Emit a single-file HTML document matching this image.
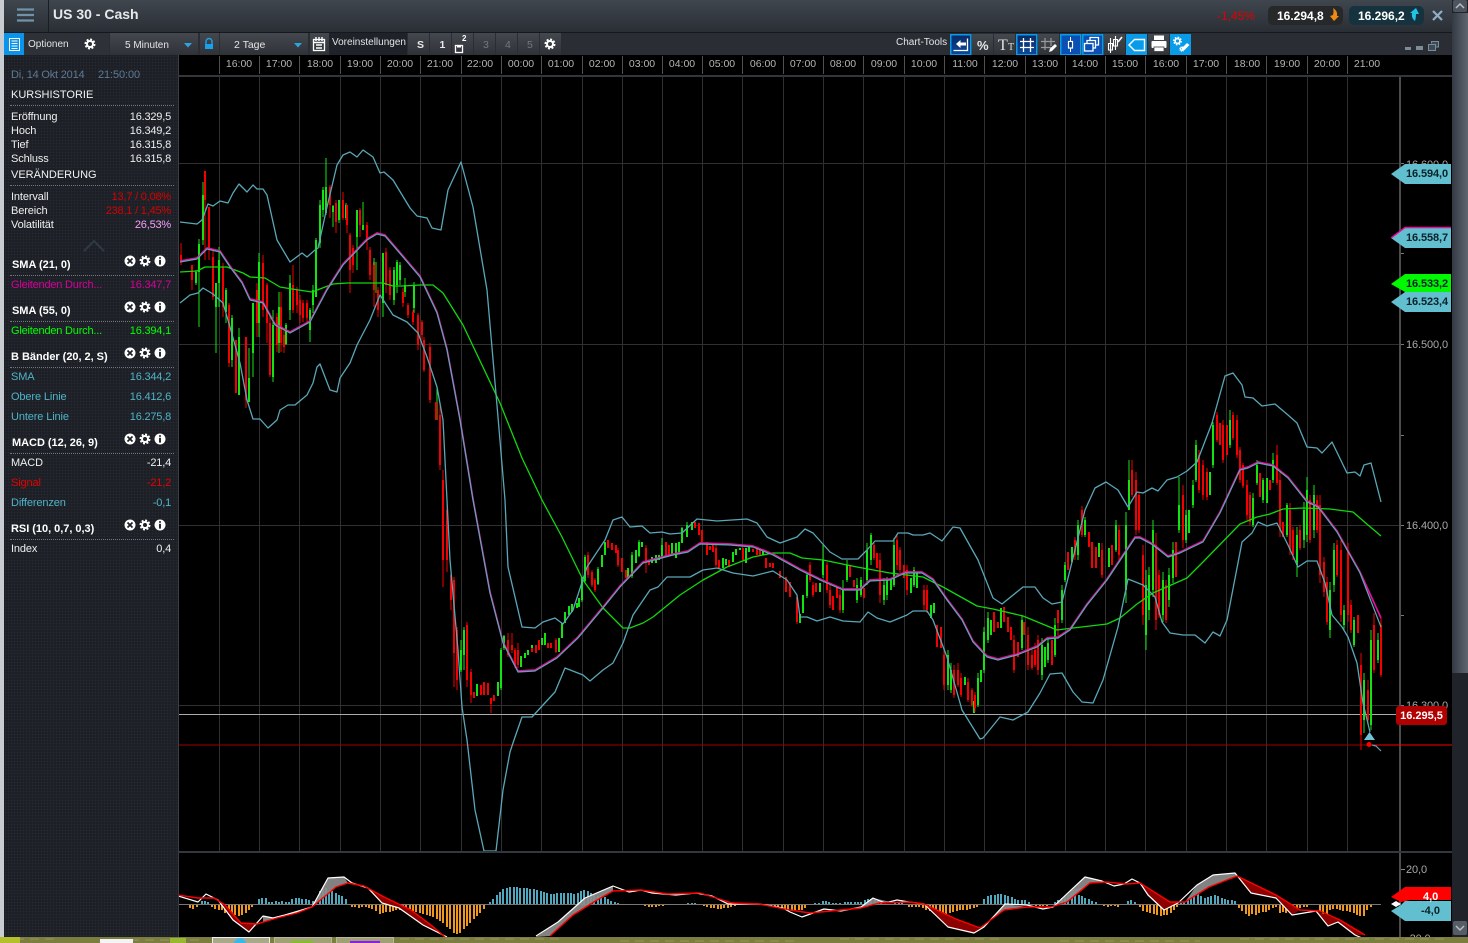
<!DOCTYPE html>
<html lang="de"><head><meta charset="utf-8"><title>US 30 - Cash</title>
<style>
html,body{margin:0;padding:0;width:1468px;height:943px;overflow:hidden;background:#000;font-family:"Liberation Sans",Arial,sans-serif}
#c{position:absolute;left:0;top:0}
#c text{font-family:"Liberation Sans",Arial,sans-serif}
.p{position:absolute;left:4px;top:55px;width:174px;height:882px;background-color:#1c2026;background-image:radial-gradient(#262b31 35%,transparent 40%);background-size:3px 3px}
.r{position:absolute;left:7px;width:160px;height:14px;line-height:14px;font-size:11px;color:#eee;display:flex;justify-content:space-between;white-space:pre;margin-top:1px}
.r span:first-child{letter-spacing:-.12px}
.r span:last-child{letter-spacing:-.2px}
.h{position:absolute;left:7px;height:14px;line-height:14px;font-size:11px;color:#f2f2f2;white-space:pre;margin-top:1px}
.b{font-weight:bold;left:8px;color:#fff;letter-spacing:-.03px}
.d{position:absolute;left:6px;width:164px;border-top:1px dotted #74787d;height:0}
</style></head><body>
<svg id="c" width="1468" height="943" viewBox="0 0 1468 943" xmlns="http://www.w3.org/2000/svg">
<defs>
<linearGradient id="tb" x1="0" y1="0" x2="0" y2="1"><stop offset="0" stop-color="#40464e"/><stop offset="1" stop-color="#292e35"/></linearGradient>
<linearGradient id="bt" x1="0" y1="0" x2="0" y2="1"><stop offset="0" stop-color="#44494f"/><stop offset="1" stop-color="#2f3338"/></linearGradient>
<linearGradient id="sc" x1="0" y1="0" x2="1" y2="0"><stop offset="0" stop-color="#333a43"/><stop offset="1" stop-color="#5f666f"/></linearGradient>
<linearGradient id="bl" x1="0" y1="0" x2="0" y2="1"><stop offset="0" stop-color="#0a2a66"/><stop offset="1" stop-color="#0b4a9c"/></linearGradient>
<clipPath id="m"><rect x="179" y="76" width="1221" height="775"/></clipPath>
<clipPath id="n"><rect x="179" y="853" width="1221" height="84"/></clipPath>
<g id="gear"><circle r="3" fill="none" stroke="#fff" stroke-width="2"/><circle r="4.6" fill="none" stroke="#fff" stroke-width="1.800" stroke-dasharray="2 1.600"/></g>
<g id="x"><circle r="5.500" fill="#fff"/><path d="M-2.500-2.500L2.500 2.500M2.500-2.500L-2.500 2.500" stroke="#1c2026" stroke-width="1.700"/></g>
<g id="i"><circle r="5.500" fill="#fff"/><path d="M0-1.200V3.600" stroke="#1c2026" stroke-width="1.900"/><circle cy="-3" r="1" fill="#1c2026"/></g>
</defs>

<rect width="1468" height="943" fill="#000"/>
<rect x="0" y="0" width="4" height="937" fill="#c9ccd0"/>
<!-- title bar -->
<rect x="4" y="0" width="1448" height="33" fill="url(#tb)"/>
<rect x="4" y="32" width="1448" height="1" fill="#15181c"/>
<rect x="48" y="0" width="1" height="32" fill="#1a1d22"/>
<path d="M17 9.500H34M17 15H34M17 20.500H34" stroke="#6f93a8" stroke-width="2.200"/>
<text x="53" y="19" font-size="14" font-weight="bold" fill="#e6e8ea">US 30 - Cash</text>
<text x="1217" y="20" font-size="12" fill="#e00000">-1,45%</text>
<rect x="1268" y="6" width="75" height="19" rx="5" fill="#26282a"/>
<text x="1277" y="20" font-size="12" font-weight="bold" fill="#fff">16.294,8</text>
<path d="M1333 8Q1338 11 1337 16L1339 16L1334 21L1330 16L1333 15Q1334 11 1333 8Z" fill="#f08a10"/>
<rect x="1349" y="6" width="75" height="19" rx="5" fill="#15323e"/>
<text x="1358" y="20" font-size="12" font-weight="bold" fill="#fff">16.296,2</text>
<path d="M1415 21Q1411 18 1412 13L1410 13L1416 8L1419 14L1416 14Q1416 18 1415 21Z" fill="#20c4e4"/>
<path d="M1433 11L1442 20M1442 11L1433 20" stroke="#8eb0c6" stroke-width="2.200"/>
<!-- toolbar -->
<rect x="4" y="33" width="1448" height="22" fill="#2a2e34"/>
<rect x="4" y="33" width="20" height="22" fill="#0a94ea"/>
<rect x="9.500" y="38.500" width="10" height="12" fill="none" stroke="#fff"/><path d="M11.500 41H17.500M11.500 43.500H17.500M11.500 46H17.500M11.500 48.500H17.500" stroke="#fff"/>
<rect x="24" y="33" width="85" height="22" fill="#2e3238"/>
<rect x="110" y="33" width="88" height="22" fill="url(#bt)"/>
<rect x="200" y="33" width="19" height="22" fill="url(#bt)"/>
<rect x="220" y="33" width="88" height="22" fill="url(#bt)"/>
<rect x="310" y="33" width="19" height="22" fill="url(#bt)"/>
<rect x="329" y="33" width="78" height="22" fill="#1f2329"/>
<g fill="url(#bt)"><rect x="408" y="33" width="21" height="22"/><rect x="430" y="33" width="21" height="22"/><rect x="452" y="33" width="21" height="22"/><rect x="474" y="33" width="21" height="22"/><rect x="496" y="33" width="21" height="22"/><rect x="518" y="33" width="21" height="22"/><rect x="540" y="33" width="21" height="22"/></g>
<g font-size="10" fill="#e4e4e4">
<text x="28" y="47">Optionen</text><text x="125" y="48">5 Minuten</text><text x="234" y="48" font-size="10.500">2 Tage</text><text x="332" y="45">Voreinstellungen</text>
<text x="896" y="45">Chart-Tools</text>
</g>
<use href="#gear" x="90" y="44"/><use href="#gear" x="550" y="44"/>
<path d="M184 43H192L188 47.500ZM294 43H302L298 47.500Z" fill="#2aa5e0"/>
<path d="M206 44.500V41.500A3 3 0 0 1 212 41.500V44.500" fill="none" stroke="#19a2ea" stroke-width="1.400"/><rect x="205" y="44" width="8" height="5" fill="#19a2ea"/>
<rect x="313.500" y="39.500" width="11" height="11" fill="none" stroke="#fff" stroke-width="1.300"/><path d="M313 42.500H325M316 37V41M319 37V41M322 37V41M316 45H322M316 48H322" stroke="#fff" stroke-width="1.400"/>
<g font-size="10.500" font-weight="bold" fill="#e8e8e8"><text x="417" y="48">S</text><text x="439.500" y="48">1</text></g>
<rect x="455.500" y="45.500" width="7" height="7" fill="none" stroke="#fff" stroke-width="1.300"/><rect x="457" y="45" width="4" height="2.500" fill="#fff"/><text x="462" y="41" font-size="8" font-weight="bold" fill="#fff">2</text>
<g font-size="10.500" fill="#74787d"><text x="483" y="48">3</text><text x="505" y="48">4</text><text x="527" y="48">5</text></g>
<!-- chart tools -->
<g stroke="#0a9be8" stroke-width="1.500">
<rect x="950.750" y="34.750" width="20" height="20" fill="url(#bl)"/>
<rect x="1016.750" y="34.750" width="20" height="20" fill="url(#bl)"/>
<rect x="1060.750" y="34.750" width="20" height="20" fill="#0a50b4"/>
<rect x="1082.750" y="34.750" width="20" height="20" fill="#0a50b4"/>
</g>
<g fill="url(#bt)"><rect x="972" y="34" width="21" height="21"/><rect x="994" y="34" width="21" height="21"/><rect x="1038" y="34" width="21" height="21"/><rect x="1104" y="34" width="21" height="21"/><rect x="1148" y="34" width="21" height="21"/></g>
<rect x="1126" y="34" width="21" height="21" fill="#0a9be8"/><rect x="1170" y="34" width="21" height="21" fill="#0a9be8"/>
<path d="M967.500 38.500V50.500H953.500" fill="none" stroke="#fff" stroke-width="1.300"/><path d="M956 44L960.500 40V42.500H966V45.500H960.500V48Z" fill="#fff"/>
<text x="977" y="50" font-size="13" font-weight="bold" fill="#e6e6e6">%</text>
<text x="998" y="50" font-size="16" fill="#e0e0e0" style="font-family:'Liberation Serif',serif">T</text><text x="1008" y="50" font-size="10" fill="#e0e0e0" style="font-family:'Liberation Serif',serif">T</text>
<path d="M1023.500 38V52M1030.500 38V52M1020 41.500H1034M1020 47.500H1034" stroke="#fff" stroke-width="1.300"/>
<path d="M1045 38V50M1051 38V46M1041 41.500H1055M1041 47.500H1051" stroke="#9a9a9a" stroke-width="1.200"/><path d="M1049 52L1050 48.500L1055 44L1057 46L1052 51Z" fill="#fff"/>
<path d="M1070.500 37V52" stroke="#fff"/><rect x="1068.500" y="41.500" width="4" height="6.500" fill="url(#bl)" stroke="#fff" stroke-width="1.200"/>
<path d="M1090 40.500V37.500H1098.500V45H1096M1087 43.500V40.500H1095.500V48H1093" fill="none" stroke="#fff" stroke-width="1.300"/><rect x="1084.500" y="43.500" width="8.500" height="7.500" fill="none" stroke="#fff" stroke-width="1.300"/>
<path d="M1110.500 38V53M1115.500 36V50M1108.500 43.500H1112.500V50H1108.500ZM1113.500 39.500H1117.500V46H1113.500Z" fill="none" stroke="#fff" stroke-width="1.100"/><path d="M1118 42L1122 37" stroke="#fff" stroke-width="1.600"/>
<path d="M1129 45L1134.500 39.500H1144.500V50.500H1134.500Z" fill="none" stroke="#fff" stroke-width="1.400"/>
<path d="M1154 35.500H1164V40H1154Z" fill="#fff"/><rect x="1151.500" y="41" width="15" height="7" rx="1" fill="#fff"/><rect x="1154" y="47" width="10" height="4.500" fill="#fff" stroke="#3a3e44" stroke-width=".8"/>
<g transform="translate(1177.500 41) scale(.8)"><use href="#gear"/></g><g transform="translate(1182 49) scale(.5)"><use href="#gear"/></g><path d="M1181 51L1182 48L1187 43L1189.500 45L1184.500 50Z" fill="#fff"/>
<g fill="#7a8c98"><rect x="1405" y="47" width="6" height="3"/><rect x="1416" y="46" width="7" height="4"/></g>
<path d="M1431.500 43.500V41.500H1438.500V47H1436M1428.500 44.500H1435.500V50.500H1428.500Z" fill="#3a4a56" stroke="#7a8c98"/>

<!-- time header -->
<rect x="179" y="55" width="1273" height="20" fill="#000"/>
<g id="tk" stroke="#505050" stroke-width="1"><path d="M219.500 56V74M259.500 56V74M299.500 56V74M340.500 56V74M380.500 56V74M420.500 56V74M461.500 56V74M501.500 56V74M541.500 56V74M582.500 56V74M622.500 56V74M662.500 56V74M702.500 56V74M742.500 56V74M783.500 56V74M823.500 56V74M863.500 56V74M904.500 56V74M944.500 56V74M984.500 56V74M1025.500 56V74M1065.500 56V74M1105.500 56V74M1145.500 56V74M1186.500 56V74M1226.500 56V74M1266.500 56V74M1307.500 56V74M1347.500 56V74"/></g>
<g font-size="10.500" fill="#b4b4b4" text-anchor="middle">
<text x="239" y="67">16:00</text><text x="279" y="67">17:00</text><text x="320" y="67">18:00</text><text x="360" y="67">19:00</text><text x="400" y="67">20:00</text><text x="440" y="67">21:00</text><text x="480" y="67">22:00</text><text x="521" y="67">00:00</text><text x="561" y="67">01:00</text><text x="602" y="67">02:00</text><text x="642" y="67">03:00</text><text x="682" y="67">04:00</text><text x="722" y="67">05:00</text><text x="763" y="67">06:00</text><text x="803" y="67">07:00</text><text x="843" y="67">08:00</text><text x="884" y="67">09:00</text><text x="924" y="67">10:00</text><text x="965" y="67">11:00</text><text x="1005" y="67">12:00</text><text x="1045" y="67">13:00</text><text x="1085" y="67">14:00</text><text x="1125" y="67">15:00</text><text x="1166" y="67">16:00</text><text x="1206" y="67">17:00</text><text x="1247" y="67">18:00</text><text x="1287" y="67">19:00</text><text x="1327" y="67">20:00</text><text x="1367" y="67">21:00</text>
</g>
<rect x="179" y="75" width="1273" height="2" fill="#33373c"/>
<rect x="178" y="55" width="1" height="882" fill="#3a3f45"/>

<!-- main grid -->
<path stroke="#303030" stroke-width="1" d="M219.500 77V851M259.500 77V851M299.500 77V851M340.500 77V851M380.500 77V851M420.500 77V851M461.500 77V851M501.500 77V851M541.500 77V851M582.500 77V851M622.500 77V851M662.500 77V851M702.500 77V851M742.500 77V851M783.500 77V851M823.500 77V851M863.500 77V851M904.500 77V851M944.500 77V851M984.500 77V851M1025.500 77V851M1065.500 77V851M1105.500 77V851M1145.500 77V851M1186.500 77V851M1226.500 77V851M1266.500 77V851M1307.500 77V851M1347.500 77V851M179 163.500H1400M179 344.500H1400M179 525.500H1400M179 705.500H1400"/>
<rect x="1399" y="77" width="2" height="860" fill="#4c4c4c"/>
<path stroke="#777" d="M1401 163.500H1404M1401 253.500H1404M1401 344.500H1404M1401 435.500H1404M1401 525.500H1404M1401 615.500H1404M1401 705.500H1404"/>
<g font-size="11" fill="#a9a9a9" letter-spacing="-.1"><text x="1406" y="168">16.600,0</text><text x="1406" y="348">16.500,0</text><text x="1406" y="529">16.400,0</text><text x="1406" y="709">16.300,0</text><text x="1406" y="873">20,0</text><text x="1406" y="942">-20,0</text></g>
<path d="M179 714.500H1396" stroke="#ababab"/>
<path d="M179 745H1370" stroke="#a00000"/><path d="M1370 745H1452" stroke="#f00"/>

<g clip-path="url(#m)">
<!-- candles -->
<g shape-rendering="crispEdges" fill="none">
<path stroke="#12e412" stroke-width="1" d="M196 270V285M199 239V327M203 182V245M216 283V353M219 247V307M226 288V323M232 315V367M239 328V395M249 348V402M253 303V377M259 253V337M273 310V382M279 292V353M286 323V345M290 275V320M310 308V342M313 285V313M316 238V297M320 200V248M323 187V217M326 158V215M333 205V227M339 200V223M346 203V220M357 210V270M363 202V230M374 258V278M376 262V293M383 253V317M394 267V305M397 260V293M400 262V285M405 278V297M414 282V313M437 387V420M461 640V672M464 627V670M501 648V690M504 635V650M582 577V602M585 555V583M598 567V585M632 552V578M639 540V557M662 538V557M682 527V543M687 522V537M807 573V598M823 545V578M843 580V613M847 560V582M857 578V603M861 577V597M867 543V585M871 533V565M884 578V605M887 577V600M894 538V587M914 567V587M948 650V690M951 663V693M978 673V707M984 627V673M988 612V643M1022 615V650M1042 638V680M1048 638V663M1055 618V657M1062 585V623M1065 562V582M1078 520V560M1085 517V537M1116 520V552M1126 512V603M1129 460V510M1146 570V650M1149 567V620M1153 520V597M1163 572V622M1169 568V607M1173 542V583M1179 477V533M1186 510V543M1193 480V508M1196 440V482M1213 422V468M1230 410V448M1253 493V527M1257 460V485M1263 478V503M1273 453V483M1287 503V537M1297 527V577M1304 502V548M1307 477V542M1314 485V538M1330 582V638M1334 543V592M1344 605V630M1354 617V647M1364 673V733M1371 630V730M1378 633V663"/>
<path stroke="#12e412" stroke-width="2" d="M196 272V283M199 244V272M203 195V240M216 283V307M219 260V283M226 290V312M232 318V360M239 337V395M249 378V402M253 303V353M259 262V323M273 325V377M279 307V343M286 325V344M290 283V310M310 310V330M313 290V305M316 240V297M320 205V243M323 190V210M326 187V213M333 206V212M339 200V220M346 205V218M357 210V237M363 225V230M374 262V275M383 253V303M394 270V300M397 262V285M400 265V280M405 285V292M414 285V308M461 650V670M464 630V655M477 684V696M498 682V696M501 650V688M504 636V648M521 656V667M525 653V658M528 650V655M532 645V650M542 638V645M545 633V645M559 638V652M562 623V638M565 612V623M569 606V615M572 604V612M577 603V608M579 598V607M582 577V600M585 557V581M598 569V584M602 555V567M605 542V555M628 568V578M632 555V576M636 550V563M639 542V556M642 542V547M652 557V563M656 555V563M659 555V560M662 545V557M672 543V555M676 543V558M679 542V552M682 528V543M687 525V537M692 522V530M723 558V568M726 559V565M733 552V562M736 549V555M740 548V550M746 548V563M749 547V552M763 550V555M800 614V623M803 595V613M807 575V596M820 583V592M823 560V575M843 590V610M847 565V580M857 585V600M861 580V595M867 550V580M871 535V560M884 585V600M887 580V595M891 580V590M894 545V585M911 578V593M914 570V585M917 573V588M931 605V618M934 603V613M948 655V685M951 670V690M965 677V685M974 701V713M978 678V705M981 670V682M984 632V670M988 618V640M991 620V635M1001 608V628M1022 620V648M1042 645V675M1045 647V667M1048 643V660M1055 625V655M1062 590V620M1065 565V580M1072 547V562M1078 525V555M1085 520V535M1099 543V557M1109 548V567M1116 525V550M1126 525V590M1129 480V510M1146 585V635M1149 575V610M1153 530V590M1163 580V615M1169 575V600M1173 550V578M1179 505V530M1186 515V540M1189 510V533M1193 485V505M1196 445V480M1210 472V495M1213 425V465M1230 420V445M1253 498V525M1257 465V483M1263 480V500M1267 478V503M1273 460V480M1287 505V535M1297 535V565M1304 510V540M1307 490V535M1314 495V530M1330 590V630M1334 550V585M1344 610V625M1354 620V645M1364 680V720M1371 640V725M1378 640V660"/>
<path stroke="#f40000" stroke-width="1" d="M181 243V265M192 265V290M205 171V260M209 207V260M213 250V300M223 263V317M229 303V367M236 340V393M246 337V408M257 283V337M263 255V317M267 283V343M270 313V377M277 313V352M281 292V352M284 330V353M293 265V313M297 287V313M300 295V323M303 300V322M307 300V322M330 185V218M336 200V233M343 192V220M347 205V233M350 233V293M353 245V273M360 208V237M367 222V250M370 247V280M374 262V307M378 287V317M386 248V293M390 267V300M403 288V307M408 303V318M413 310V325M418 313V350M422 320V340M424 337V372M430 343V403M436 402V420M440 405V470M443 470V587M447 500V572M451 572V610M454 577V687M457 627V690M467 622V687M471 669V703M491 698V713M508 633V657M512 633V653M515 648V668M518 643V668M556 638V653M588 552V578M592 570V587M595 578V592M618 548V567M646 545V573M716 545V567M797 595V624M810 562V582M813 582V597M827 562V593M830 585V608M840 590V613M874 543V560M880 553V603M897 535V570M900 547V573M907 565V595M924 585V610M927 585V613M944 648V690M954 665V698M958 663V687M961 673V697M968 678V702M972 688V707M975 692V712M1014 635V673M1028 627V670M1032 650V670M1035 643V667M1038 635V675M1058 610V637M1075 537V560M1082 506V537M1102 543V578M1119 525V560M1132 460V497M1136 472V535M1139 493V533M1143 545V625M1156 533V630M1159 570V618M1166 580V623M1183 485V548M1199 450V493M1203 460V500M1207 468V500M1217 412V442M1223 420V463M1233 412V440M1237 415V458M1240 447V483M1243 463V488M1247 480V520M1250 492V525M1277 445V485M1280 470V537M1290 503V555M1293 527V560M1300 525V550M1310 495V543M1317 495V533M1320 495V583M1324 557V597M1327 577V625M1337 540V577M1341 540V622M1348 543V622M1351 600V633M1361 653V750M1368 680V725M1374 613V673M1381 618V677"/>
<path stroke="#f40000" stroke-width="2" d="M181 255V262M192 265V280M205 171V200M209 207V250M213 257V297M223 267V307M229 305V363M236 340V393M246 337V400M257 290V323M263 263V310M267 285V323M270 323V375M277 317V345M281 307V343M284 335V347M293 285V310M297 290V305M300 300V315M303 303V318M307 303V318M330 187V205M336 203V222M343 200V218M347 205V225M350 235V270M353 248V265M360 210V225M367 225V240M370 250V275M374 265V290M378 290V310M386 252V285M390 270V295M403 292V303M408 305V315M413 312V322M418 315V345M422 322V335M424 340V370M430 347V400M436 402V420M440 415V465M443 480V560M447 510V560M451 575V600M454 580V653M457 630V680M467 625V680M471 672V695M474 692V698M481 685V695M484 682V695M488 683V695M491 698V704M494 695V701M508 640V655M512 645V650M515 650V665M518 650V665M532 648V652M536 645V653M539 640V650M548 643V648M551 643V648M556 640V652M588 555V575M592 572V585M595 580V590M608 540V548M612 543V550M616 545V553M618 550V565M622 558V572M626 570V578M646 548V562M649 560V565M666 542V555M669 545V555M695 522V528M699 523V535M702 530V542M707 542V555M710 546V550M713 545V552M716 548V565M719 560V568M729 560V567M743 548V560M753 549V552M757 549V555M760 550V555M766 558V568M770 563V567M773 563V568M780 571V578M786 577V592M790 582V597M797 597V622M810 565V580M813 585V595M816 583V592M827 565V590M830 590V605M833 596V610M837 587V598M840 595V610M850 565V577M854 580V587M864 588V598M874 545V558M877 553V568M880 560V595M897 540V565M900 550V570M904 565V578M907 570V590M924 590V605M927 590V610M937 625V647M941 627V648M944 655V685M954 670V695M958 670V685M961 678V695M968 682V700M972 690V705M975 695V708M994 612V632M998 622V628M1004 607V622M1008 617V632M1011 627V640M1014 640V670M1018 642V657M1024 622V635M1028 635V665M1032 655V668M1035 650V665M1038 640V670M1052 640V665M1058 610V623M1068 552V570M1075 540V555M1082 510V535M1089 532V547M1092 542V568M1096 547V568M1102 550V575M1112 545V565M1119 530V555M1132 470V495M1136 480V530M1139 495V530M1143 555V615M1156 545V620M1159 575V615M1166 585V620M1176 542V577M1183 495V540M1199 455V490M1203 465V495M1207 472V497M1217 415V440M1220 423V445M1223 425V460M1227 425V455M1233 415V438M1237 420V455M1240 450V480M1243 465V486M1247 485V515M1250 495V522M1260 473V497M1270 480V490M1277 455V483M1280 480V530M1283 522V537M1290 510V550M1293 530V555M1300 530V548M1310 500V540M1317 500V530M1320 505V575M1324 562V592M1327 582V622M1337 545V575M1341 550V615M1348 550V615M1351 605V630M1358 615V633M1361 665V735M1368 690V720M1374 625V670M1381 625V675"/>
</g>
<!-- SMA55 -->
<polyline fill="none" stroke="#12d80d" stroke-width="1.300" stroke-linejoin="round" points="180,272 197,271 205,267 227,267 243,273 250,277 265,278 280,287 292,289 312,292 333,284 347,283 360,283 383,283 393,286 403,286 420,285 433,285 443,293 463,325 500,403 522,458 542,500 562,537 583,580 603,608 623,628 630,628 643,623 653,617 680,595 703,580 727,567 753,557 773,553 790,553 802,558 823,560 857,567 890,573 923,577 943,587 977,606 993,609 1023,616 1040,623 1057,630 1073,628 1107,624 1120,618 1137,604 1153,593 1187,578 1203,562 1240,524 1257,517 1270,514 1283,509 1303,508 1330,509 1353,512 1368,525 1381,536"/>
<!-- SMA21 / BB mid -->
<polyline fill="none" stroke="#e0109a" stroke-width="1.700" stroke-linejoin="round" transform="translate(0,-1)" points="180,262 197,259 207,249 220,252 230,267 242,283 250,300 263,303 275,325 290,333 310,322 327,290 343,265 367,240 377,234 385,236 403,257 420,277 437,313 447,350 460,420 473,500 490,593 503,643 518,672 535,671 557,658 578,638 603,608 620,587 643,563 673,555 688,552 700,544 730,545 753,547 773,555 800,570 820,580 843,590 860,590 870,581 890,580 905,573 922,573 933,580 947,600 962,620 973,642 987,657 998,660 1017,655 1037,647 1047,639 1058,638 1070,630 1087,605 1107,580 1135,538 1140,538 1153,545 1168,557 1180,553 1203,542 1220,513 1240,470 1248,468 1258,463 1273,466 1288,478 1307,502 1318,507 1337,532 1360,573 1381,619"/>
<polyline fill="none" stroke="#5aa7b8" stroke-width="1.200" stroke-linejoin="round" points="180,262 197,259 207,249 220,252 230,267 242,283 250,300 263,303 275,325 290,333 310,322 327,290 343,265 367,240 377,234 385,236 403,257 420,277 437,313 447,350 460,420 473,500 490,593 503,643 518,672 535,671 557,658 578,638 603,608 620,587 643,563 673,555 688,552 700,544 730,545 753,547 773,555 800,570 820,580 843,590 860,590 870,581 890,580 905,573 922,573 933,580 947,600 962,620 973,642 987,657 998,660 1017,655 1037,647 1047,639 1058,638 1070,630 1087,605 1107,580 1135,538 1140,538 1153,545 1168,557 1180,553 1203,542 1220,513 1240,470 1248,468 1258,463 1273,466 1288,478 1307,502 1318,507 1337,532 1360,573 1381,627"/>
<!-- upper band -->
<polyline fill="none" stroke="#5aa7b8" stroke-width="1.300" stroke-linejoin="round" points="180,222 197,224 202,220 208,204 213,206 220,201 228,203 233,193 239,184 247,192 253,185 257,189 263,189 267,195 277,240 290,262 302,253 307,257 315,250 318,248 327,207 337,165 343,155 350,152 357,157 363,150 373,157 380,173 384,172 393,180 410,208 417,216 427,218 432,228 441,230 448,190 461,162 473,207 487,290 498,417 505,500 508,567 522,627 535,628 543,622 555,618 563,624 573,610 587,567 605,540 613,520 622,517 630,527 642,526 650,533 662,532 670,534 682,533 697,519 717,521 747,519 757,523 767,537 780,543 797,537 805,529 813,533 830,552 842,559 858,559 867,550 875,541 893,541 898,533 908,533 913,535 923,535 930,533 942,541 953,527 960,528 978,560 993,598 1002,604 1023,587 1035,587 1043,598 1052,604 1062,602 1085,510 1095,488 1106,482 1118,490 1128,507 1137,492 1143,493 1152,488 1158,491 1167,480 1177,477 1187,471 1197,462 1212,423 1225,376 1233,373 1242,385 1245,397 1253,398 1262,406 1275,404 1288,415 1297,423 1307,447 1317,448 1322,453 1332,442 1347,473 1355,472 1360,476 1364,465 1371,463 1381,502"/>
<!-- lower band -->
<polyline fill="none" stroke="#5aa7b8" stroke-width="1.300" stroke-linejoin="round" points="180,303 190,295 198,293 203,288 213,294 223,303 230,327 240,363 247,400 253,419 260,419 268,428 277,420 280,410 288,405 295,405 307,395 313,383 317,367 320,364 330,390 337,392 340,378 350,363 357,345 370,320 380,295 393,315 407,322 418,333 427,357 437,387 443,420 450,560 458,650 462,707 467,740 475,810 484,851 496,851 503,790 510,752 514,740 522,717 532,717 543,705 555,692 565,668 583,675 590,681 603,670 613,663 623,643 633,615 650,590 658,587 667,577 690,577 703,570 717,568 733,573 753,576 773,571 787,580 797,595 800,617 807,617 817,621 830,617 843,621 860,622 868,612 877,618 890,622 907,615 913,611 927,611 933,620 947,657 962,710 980,739 983,738 1000,717 1013,720 1028,712 1040,693 1050,674 1062,673 1073,692 1082,702 1093,703 1103,680 1118,627 1128,579 1143,585 1155,597 1162,622 1170,633 1183,635 1195,635 1205,643 1213,632 1220,636 1227,620 1242,542 1252,533 1258,522 1267,526 1277,523 1288,545 1298,567 1307,561 1317,561 1325,583 1332,615 1342,627 1348,637 1357,663 1363,703 1370,732"/>
<path d="M1364 740L1369.500 732L1375 740Z" fill="#6fc4d8"/>
<circle cx="1369" cy="744.500" r="2.500" fill="#f00"/>
<path d="M1372 745L1376 746L1381 751" fill="none" stroke="#5aa7b8" stroke-width="1.200"/>
</g>

<!-- panel divider -->
<rect x="179" y="851" width="1273" height="2" fill="#33373f"/>
<rect x="1399" y="853" width="2" height="84" fill="#4c4c4c"/>
<path d="M1401 869.500H1405" stroke="#888"/>

<!-- MACD -->
<g clip-path="url(#n)">
<path d="M179 904.500H1381" stroke="#777"/>
<g shape-rendering="crispEdges" fill="none" stroke-width="2">
<path stroke="#4fa8be" d="M202 904v-3M205 904v-3M208 904v-2M259 904v-5M262 904v-6M266 904v-6M269 904v-2M272 904v-2M276 904v-3M279 904v-2M282 904v-3M286 904v-2M289 904v-2M292 904v-5M296 904v-6M299 904v-6M302 904v-5M306 904v-5M309 904v-4M313 904v-3M316 904v-4M320 904v-13M323 904v-16M326 904v-16M329 904v-13M332 904v-13M336 904v-11M339 904v-9M342 904v-8M346 904v-5M490 904v-2M493 904v-5M497 904v-9M500 904v-12M503 904v-15M507 904v-16M510 904v-17M514 904v-17M517 904v-17M520 904v-16M524 904v-16M527 904v-16M530 904v-15M534 904v-15M537 904v-14M541 904v-13M544 904v-12M547 904v-11M551 904v-10M554 904v-10M557 904v-11M561 904v-11M564 904v-11M568 904v-11M571 904v-11M574 904v-10M578 904v-11M581 904v-13M584 904v-14M588 904v-13M591 904v-11M594 904v-10M598 904v-8M601 904v-8M605 904v-7M608 904v-5M611 904v-3M615 904v-2M618 904v-1M688 904v-1M692 904v-1M695 904v-1M815 904v-1M819 904v-1M823 904v-3M826 904v-3M829 904v-2M833 904v-1M836 904v-1M840 904v-1M845 904v-2M848 904v-2M851 904v-2M855 904v-2M858 904v-2M861 904v-2M865 904v-4M868 904v-5M871 904v-5M875 904v-5M878 904v-4M881 904v-2M895 904v-2M899 904v-2M902 904v-2M984 904v-5M988 904v-8M991 904v-9M995 904v-9M998 904v-10M1001 904v-10M1005 904v-9M1008 904v-8M1012 904v-7M1015 904v-5M1018 904v-4M1022 904v-4M1025 904v-4M1029 904v-2M1055 904v-2M1058 904v-4M1062 904v-6M1065 904v-8M1068 904v-9M1072 904v-10M1075 904v-10M1079 904v-9M1082 904v-8M1085 904v-6M1089 904v-5M1092 904v-3M1096 904v-2M1128 904v-3M1131 904v-4M1135 904v-2M1181 904v-1M1184 904v-2M1188 904v-4M1191 904v-7M1194 904v-8M1198 904v-10M1201 904v-8M1205 904v-6M1208 904v-7M1211 904v-8M1215 904v-9M1218 904v-8M1222 904v-6M1225 904v-5M1228 904v-4M1232 904v-4M1235 904v-3"/>
<path stroke="#ef981c" d="M190 905v3M193 905v4M197 905v2M212 905v2M215 905v4M219 905v5M222 905v5M225 905v8M229 905v10M232 905v12M235 905v10M239 905v11M242 905v10M246 905v8M249 905v5M252 905v2M352 905v2M355 905v2M359 905v3M362 905v2M366 905v2M369 905v3M372 905v4M376 905v6M380 905v9M383 905v8M386 905v7M390 905v7M393 905v6M396 905v5M400 905v5M403 905v4M406 905v4M410 905v5M413 905v6M416 905v7M420 905v8M423 905v9M427 905v10M430 905v11M433 905v12M437 905v14M440 905v16M443 905v18M447 905v22M450 905v24M454 905v28M457 905v29M460 905v28M464 905v24M467 905v21M470 905v18M474 905v14M477 905v11M480 905v8M484 905v4M645 905v1M649 905v2M652 905v2M656 905v2M659 905v1M663 905v1M704 905v1M707 905v2M711 905v3M714 905v3M718 905v4M721 905v4M724 905v3M728 905v3M731 905v2M735 905v1M771 905v1M775 905v2M778 905v3M782 905v3M785 905v4M788 905v5M792 905v5M795 905v5M799 905v5M802 905v5M805 905v3M909 905v2M912 905v2M916 905v2M919 905v2M923 905v3M926 905v5M930 905v6M933 905v7M936 905v8M940 905v8M943 905v9M946 905v9M950 905v8M953 905v7M957 905v6M960 905v5M963 905v5M967 905v5M970 905v4M974 905v3M977 905v2M1036 905v1M1040 905v1M1043 905v1M1047 905v1M1104 905v1M1108 905v2M1111 905v1M1115 905v1M1118 905v2M1140 905v2M1143 905v6M1147 905v7M1150 905v8M1154 905v9M1157 905v10M1161 905v11M1164 905v10M1167 905v10M1171 905v8M1174 905v5M1177 905v2M1239 905v3M1242 905v6M1246 905v9M1249 905v11M1252 905v9M1256 905v10M1259 905v8M1263 905v7M1266 905v7M1269 905v5M1273 905v3M1276 905v2M1280 905v8M1283 905v7M1286 905v8M1290 905v5M1293 905v4M1297 905v3M1300 905v3M1304 905v2M1307 905v2M1320 905v6M1323 905v9M1327 905v9M1330 905v5M1333 905v4M1337 905v4M1340 905v5M1343 905v6M1347 905v6M1350 905v7M1354 905v8M1357 905v10M1360 905v11M1364 905v11M1367 905v5M1371 905v2"/>
</g>
<g fill="#8d8d8d" fill-opacity=".92">
<polygon points="263,922 277,918 297,913 312,907 336,887 348,883 344,877 328,878 312,907 285,915 273,918 263,916"/>
<polygon points="536,937 550,936 573,915 597,900 613,891 613,886 585,898 558,922"/>
<polygon points="980,928 1004,910 1027,907 1005,904 984,927"/>
<polygon points="1067,902 1090,883 1106,882 1085,877 1071,890"/>
<polygon points="1185,902 1209,887 1237,876 1235,873 1213,875 1197,885"/>
<polygon points="861,908 879,903 895,903 873,898"/>
<polygon points="1051,907 1067,902 1085,887 1071,890 1053,907"/>
</g>
<g fill="#8c0000">
<polygon points="214,898 225,905 241,923 257,924 263,919 249,932 233,920 218,900"/>
<polygon points="348,883 364,886 384,897 411,910 431,925 445,937 447,937 423,925 399,908 382,903 368,888"/>
<polygon points="700,893 732,903 728,904 712,896"/>
<polygon points="924,904 956,919 980,928 974,933 948,927"/>
<polygon points="1140,883 1170,902 1185,902 1178,903 1164,910 1148,895"/>
<polygon points="1237,876 1276,895 1300,910 1292,915 1276,898 1251,893"/>
<polygon points="1316,911 1340,920 1365,935 1355,935 1338,922 1328,926"/>
</g>
<g fill="none" stroke="#fff" stroke-width="1.200" stroke-linejoin="round">
<polyline points="178,896 198,902 206,894 218,900 233,920 249,932 263,916 273,918 285,915 312,907 328,878 344,877 352,883 368,888 382,903 399,908 423,925 443,935 447,937"/>
<polyline points="536,936 558,922 585,898 613,886 629,892 641,890 652,893 676,895 696,893 712,896 728,904 759,904 783,908 790,912 802,917 824,909 841,911 861,907 873,898 885,903 897,900 909,902 924,904 948,927 974,933 984,927 1005,904 1027,905 1043,909 1053,907 1071,890 1085,877 1102,881 1114,886 1124,884 1132,879 1140,883 1148,895 1164,910 1178,903 1197,885 1213,875 1235,873 1251,893 1276,898 1292,915 1316,911 1328,926 1338,922 1355,935 1362,938"/>
</g>
<g fill="none" stroke="#f00" stroke-width="1.400" stroke-linejoin="round">
<polyline points="178,895 198,898 214,898 225,905 241,923 257,924 277,918 297,913 312,907 336,887 348,883 364,886 384,897 411,910 431,925 445,937"/>
<polyline points="550,936 573,915 597,900 613,891 641,890 668,894 700,893 732,903 759,904 790,910 810,913 841,910 861,908 879,903 909,902 924,904 956,919 980,928 1004,910 1027,907 1051,907 1067,902 1090,883 1106,882 1126,884 1140,883 1170,902 1185,902 1209,887 1237,876 1276,895 1300,910 1320,911 1340,920 1365,935"/>
</g>
</g>

<!-- right tags -->
<polygon points="1391,174 1405,164 1451,164 1451,184 1405,184" fill="#62bfcf"/>
<polygon points="1391,238 1405,227 1451,227 1451,248 1405,248" fill="#62bfcf"/>
<path d="M1391 238L1405 227.500H1451" fill="none" stroke="#e0109a" stroke-width="1.500"/>
<polygon points="1391,302 1405,292 1451,292 1451,312 1405,312" fill="#62bfcf"/>
<polygon points="1391,284 1405,274 1451,274 1451,292 1405,292" fill="#00f800"/>
<g font-size="11" font-weight="bold" fill="#0a2228" letter-spacing="-.1"><text x="1406" y="177">16.594,0</text><text x="1406" y="241">16.558,7</text><text x="1406" y="287">16.533,2</text><text x="1406" y="305">16.523,4</text></g>
<rect x="1396" y="706" width="51" height="19" rx="3" fill="#b00000"/>
<text x="1421.500" y="719" font-size="11" font-weight="bold" fill="#fff" text-anchor="middle">16.295,5</text>
<polygon points="1391,897 1405,887 1451,887 1451,900 1410,900 1401,902" fill="#f00"/>
<polygon points="1391,904 1396,901 1401,904 1396,907" fill="#fff"/>
<polygon points="1391,911 1401,905 1405,901 1451,901 1451,921 1405,921" fill="#62bfcf"/>
<text x="1423" y="900" font-size="11" font-weight="bold" fill="#fff">4,0</text>
<text x="1421" y="914" font-size="11" font-weight="bold" fill="#0a2228">-4,0</text>

<!-- scrollbar -->
<rect x="1452" y="0" width="16" height="937" fill="#20242a"/>
<rect x="1452" y="13" width="16" height="660" fill="url(#sc)"/>
<rect x="1453" y="0" width="14" height="12" rx="2" fill="#4d545d"/>
<path d="M1456 8L1460 4L1464 8" fill="none" stroke="#b4bcc4" stroke-width="1.500"/>
<rect x="1453" y="921" width="14" height="14" rx="2" fill="#565d66"/>
<path d="M1456 926L1460 930L1464 926" fill="none" stroke="#b4bcc4" stroke-width="1.500"/>

<!-- wallpaper -->
<rect x="0" y="937" width="1468" height="6" fill="#7b7e3f"/>
<path d="M0 939H60M130 940H200M400 939H560M620 941H800M840 939H1000M1060 941H1200M1240 939H1450" stroke="#8a8a50" stroke-width="2" stroke-dasharray="9 6"/>
<rect x="0" y="937" width="20" height="6" fill="#b4c02c"/>
<rect x="100" y="939" width="33" height="4" fill="#f4f4f4"/>
<rect x="170" y="938" width="16" height="5" fill="#98b830"/>
<rect x="212.500" y="937.500" width="57" height="8" fill="#a7a98a" stroke="#eeeeee"/>
<rect x="274.500" y="937.500" width="57" height="8" fill="#a0a076" stroke="#b8b898"/>
<rect x="336.500" y="937.500" width="57" height="8" fill="#a0a076" stroke="#b8b898"/>
<circle cx="240" cy="944" r="6" fill="#38b8e8"/>
<rect x="291" y="941" width="22" height="2" fill="#80c020"/>
<rect x="350" y="941" width="30" height="2" fill="#8a20e0"/>
</svg>

<div class="p">
<div class="h" style="top:12px;color:#5f7894;letter-spacing:-.2px">Di, 14 Okt 2014</div>
<div class="h" style="top:12px;left:94px;color:#5f7894;letter-spacing:-.1px">21:50:00</div>
<div class="h" style="top:32px">KURSHISTORIE</div><div class="d" style="top:50px"></div>
<div class="r" style="top:54px"><span>Eröffnung</span><span>16.329,5</span></div>
<div class="r" style="top:68px"><span>Hoch</span><span>16.349,2</span></div>
<div class="r" style="top:82px"><span>Tief</span><span>16.315,8</span></div>
<div class="r" style="top:96px"><span>Schluss</span><span>16.315,8</span></div>
<div class="h" style="top:112px">VERÄNDERUNG</div><div class="d" style="top:130px"></div>
<div class="r" style="top:134px"><span>Intervall</span><span style="color:#d80000">13,7 / 0,08%</span></div>
<div class="r" style="top:148px"><span>Bereich</span><span style="color:#d80000">238,1 / 1,45%</span></div>
<div class="r" style="top:162px"><span>Volatilität</span><span style="color:#f4a0f8">26,53%</span></div>
<svg style="position:absolute;left:78px;top:183px" width="24" height="16"><path d="M2 13L12 3L22 13" fill="none" stroke="#2f3a44" stroke-width="2"/></svg>

<div class="h b" style="top:202px">SMA (21, 0)</div><div class="d" style="top:220px"></div>
<svg style="position:absolute;left:118px;top:199px" width="48" height="14"><use href="#x" x="8" y="7"/><use href="#gear" x="23" y="7"/><use href="#i" x="38" y="7"/></svg>
<div class="r" style="top:222px;color:#d6009a"><span style="letter-spacing:-.2px">Gleitenden Durch...</span><span>16.347,7</span></div>

<div class="h b" style="top:248px">SMA (55, 0)</div><div class="d" style="top:266px"></div>
<svg style="position:absolute;left:118px;top:245px" width="48" height="14"><use href="#x" x="8" y="7"/><use href="#gear" x="23" y="7"/><use href="#i" x="38" y="7"/></svg>
<div class="r" style="top:268px;color:#0f0"><span style="letter-spacing:-.2px">Gleitenden Durch...</span><span>16.394,1</span></div>

<div class="h b" style="top:294px;left:7px">B Bänder (20, 2, S)</div><div class="d" style="top:312px"></div>
<svg style="position:absolute;left:118px;top:291px" width="48" height="14"><use href="#x" x="8" y="7"/><use href="#gear" x="23" y="7"/><use href="#i" x="38" y="7"/></svg>
<div class="r" style="top:314px;color:#4fb3c8"><span>SMA</span><span>16.344,2</span></div>
<div class="r" style="top:334px;color:#4fb3c8"><span>Obere Linie</span><span>16.412,6</span></div>
<div class="r" style="top:354px;color:#4fb3c8"><span>Untere Linie</span><span>16.275,8</span></div>

<div class="h b" style="top:380px;left:8px">MACD (12, 26, 9)</div><div class="d" style="top:398px"></div>
<svg style="position:absolute;left:118px;top:377px" width="48" height="14"><use href="#x" x="8" y="7"/><use href="#gear" x="23" y="7"/><use href="#i" x="38" y="7"/></svg>
<div class="r" style="top:400px"><span>MACD</span><span>-21,4</span></div>
<div class="r" style="top:420px;color:#e60000"><span>Signal</span><span>-21,2</span></div>
<div class="r" style="top:440px;color:#4fb3c8"><span>Differenzen</span><span>-0,1</span></div>

<div class="h b" style="top:466px;left:7px">RSI (10, 0,7, 0,3)</div><div class="d" style="top:484px"></div>
<svg style="position:absolute;left:118px;top:463px" width="48" height="14"><use href="#x" x="8" y="7"/><use href="#gear" x="23" y="7"/><use href="#i" x="38" y="7"/></svg>
<div class="r" style="top:486px"><span>Index</span><span>0,4</span></div>
</div>
</body></html>
